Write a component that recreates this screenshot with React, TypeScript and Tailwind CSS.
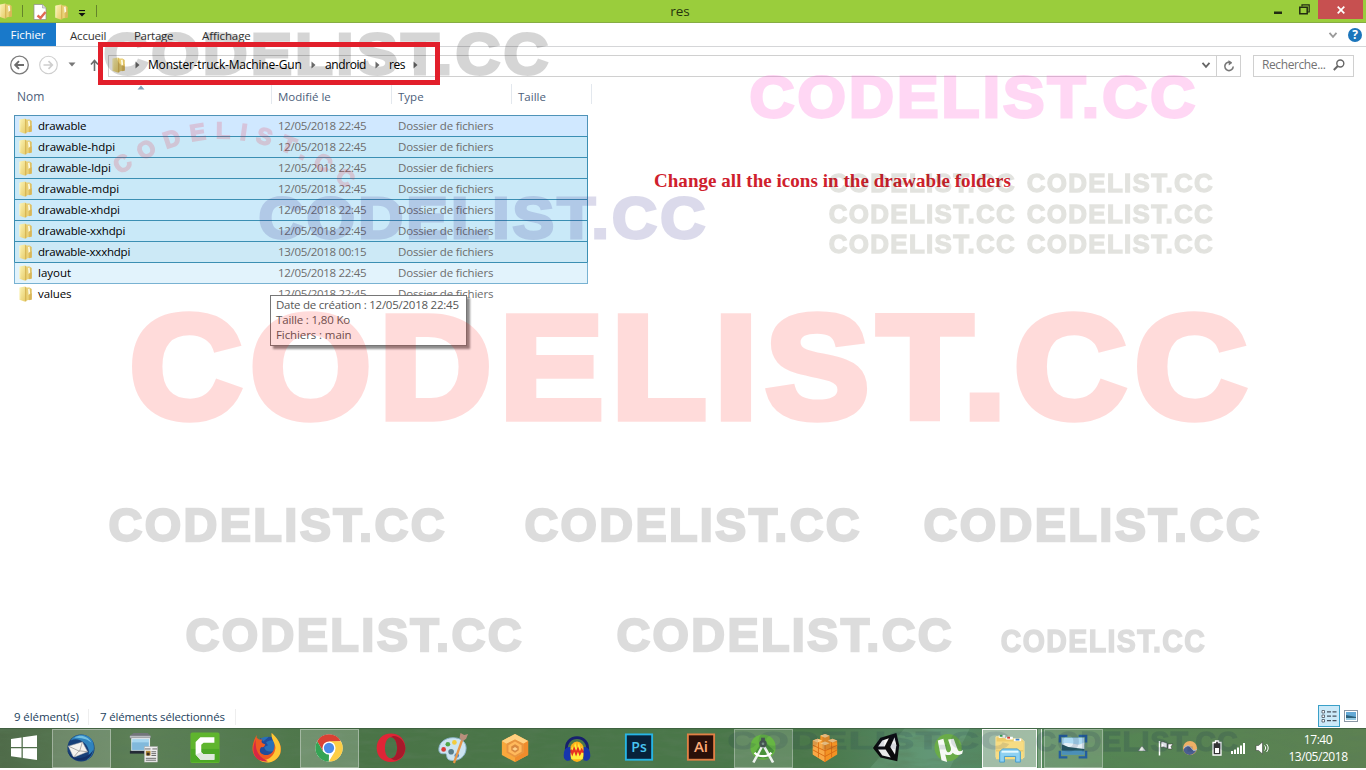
import React from 'react';

const Folder = ({ className = '' }: { className?: string }) => (
  <svg viewBox="0 0 16 16" className={'h-4 w-4 shrink-0 ' + className}>
    <defs>
      <linearGradient id="fa" x1="0" x2="1" y1="0" y2="1">
        <stop offset="0" stopColor="#fbf3b4" />
        <stop offset="1" stopColor="#e6ca66" />
      </linearGradient>
      <linearGradient id="fb" x1="0" x2="1">
        <stop offset="0" stopColor="#f7e48f" />
        <stop offset="1" stopColor="#dcbc5a" />
      </linearGradient>
    </defs>
    <path d="M6 1.500h5.500l2.200 1.600v10.400L8 14.500z" fill="url(#fb)" />
    <path d="M10 3l1.600-.6.6 5.600-1.600 1z" fill="#fdfbe6" />
    <path d="M11.500 8l2.200-.8v6.300l-2.600.7z" fill="#d9b658" />
    <path d="M1.500 1.600L7.200.6l1.200 1v13.600l-2 .4-4.900-1.800z" fill="url(#fa)" />
    <path d="M7.200.8l1.100.9v13.400l-1.100.3z" fill="#d3b04f" />
    <path d="M1.800 2v11.600" stroke="#fdf8cf" strokeWidth=".7" />
  </svg>
);

const Arrow = ({ className = '' }: { className?: string }) => (
  <svg viewBox="0 0 5 8" className={'h-2 w-[5px] shrink-0 ' + className}>
    <path d="M.5 .5L4.500 4 .5 7.500z" fill="#6a6a6a" />
  </svg>
);

const Chevron = ({ color, className = '' }: { color: string; className?: string }) => (
  <svg viewBox="0 0 10 8" className={'h-2 w-2.5 ' + className}>
    <path d="M1.500 1.800L5 5.800l3.500-4" fill="none" stroke={color} strokeWidth="1.800" />
  </svg>
);

const files = [
  ['drawable', '12/05/2018 22:45', 'tracking-[-0.2px]', 'border-[#4f93b8] bg-[#d0e8ff]'],
  ['drawable-hdpi', '12/05/2018 22:45', 'tracking-[-0.04px]', 'border-[#3b8fb3] bg-[#c9e9f8]'],
  ['drawable-ldpi', '12/05/2018 22:45', 'tracking-[-0.04px]', 'border-[#3b8fb3] bg-[#cce9f6]'],
  ['drawable-mdpi', '12/05/2018 22:45', 'tracking-[0px]', 'border-[#3b8fb3] bg-[#c9e9f8]'],
  ['drawable-xhdpi', '12/05/2018 22:45', 'tracking-[-0.12px]', 'border-[#3b8fb3] bg-[#cceafa]'],
  ['drawable-xxhdpi', '12/05/2018 22:45', 'tracking-[-0.16px]', 'border-[#3b8fb3] bg-[#c9e9f8]'],
  ['drawable-xxxhdpi', '13/05/2018 00:15', 'tracking-[-0.22px]', 'border-[#3b8fb3] bg-[#cce9f6]'],
  ['layout', '12/05/2018 22:45', '', 'border-t-[#3b8fb3] border-x-[#78b2d2] bg-[#e2f3fc]'],
  ['values', '12/05/2018 22:45', '-tracking-[0.1px]', 'border-[#78b2d2] bg-transparent'],
];

const marks: [number, number, number, number, string, number][] = [
  [104, 549, 31, 76, '#000', 0.16],
  [750, 1196, 75, 119, '#ff3ccd', 0.2],
  [259, 706, 195, 240, '#322d8c', 0.17],
  [131, 1249, 309, 423, '#ff0a05', 0.14],
  [109, 445, 507, 543, '#000', 0.135],
  [525, 860, 507, 543, '#000', 0.135],
  [924, 1260, 507, 543, '#000', 0.135],
  [186, 522, 617, 653, '#000', 0.135],
  [617, 952, 617, 653, '#000', 0.135],
  [1001, 1205, 629, 653, '#000', 0.135],
  [829, 1015, 173, 193, '#282d0f', 0.13],
  [1027, 1213, 173, 193, '#282d0f', 0.13],
  [829, 1015, 204, 224, '#282d0f', 0.13],
  [1027, 1213, 204, 224, '#282d0f', 0.13],
  [829, 1015, 234, 254, '#282d0f', 0.13],
  [1027, 1213, 234, 254, '#282d0f', 0.13],
  [728, 1010, 731, 750, '#142850', 0.12],
  [1036, 1238, 731, 752, '#142850', 0.15],
];

const Watermarks = () => (
  <svg className="pointer-events-none absolute left-0 top-0 h-[768px] w-[1366px]" viewBox="0 0 1366 768">
    {marks.map(([x1, x2, top, base, fill, opacity], i) => {
      const size = (base - top) / 0.775;
      return (
        <text
          key={i}
          x={x1 - size * 0.01}
          y={base - size * 0.036}
          textLength={x2 - x1 + size * 0.05}
          lengthAdjust="spacingAndGlyphs"
          letterSpacing={size * 0.05}
          fontFamily="'Liberation Sans', Arial, sans-serif"
          fontWeight="700"
          fontSize={size}
          fill={fill}
          stroke={fill}
          strokeWidth={size * 0.05}
          opacity={opacity}
        >
          CODELIST.CC
        </text>
      );
    })}
    <path id="arc" d="M120 175Q225 97 342 185" fill="none" />
    <text
      fontFamily="'Liberation Sans', Arial, sans-serif"
      fontWeight="700"
      fontSize="23"
      fill="#f0283c"
      stroke="#f0283c"
      strokeWidth="1.600"
      opacity=".18"
    >
      <textPath href="#arc" textLength="248">
        CODELIST.CC
      </textPath>
    </text>
  </svg>
);

const apps: { name: string; box?: string; art: React.ReactNode }[] = [
  {
    name: 'mail',
    box: 'border border-white/35 bg-white/15',
    art: (
      <>
        <circle cx="16" cy="16" r="14.500" fill="#173f78" />
        <path d="M5 8C9 1 22-1 28 8c4 8 1 17-6 21 4-7 3-13-2-18C15 6 9 6 5 8z" fill="#2f83bd" />
        <path d="M9 5c6-4 14-2 18 5-5-4-11-5-18-5z" fill="#72bfe1" />
        <path d="M2.500 14l15-4.500L23 20 8 26z" fill="#f5f2ee" stroke="#a8a9ad" strokeWidth=".5" />
        <path d="M2.500 14l12 5.500 3-10M14 19l-6 7M14 19l9 1" fill="none" stroke="#a9a6a4" />
        <path d="M1 18c3 10 12 13 21 10 4-2 6-6 7-10-4 7-13 10-20 8-4-2-6-4-8-8z" fill="#132f66" />
      </>
    ),
  },
  {
    name: 'news',
    art: (
      <>
        <path d="M2 3l4-3h15l3 3v3H2z" fill="#72757b" />
        <path d="M2 3h22v2H2z" fill="#b9bcc1" />
        <rect x="4" y="6" width="19" height="13" fill="#a7d6ef" stroke="#e9eef2" />
        <path d="M4 10h18v8H4z" fill="#5b9cc8" opacity=".5" />
        <path d="M2 19h23v3H2z" fill="#242a35" />
        <rect x="17.500" y="14.500" width="14" height="16.500" fill="#eee" stroke="#aaa" strokeWidth=".5" />
        <path d="M18 17h6M26 17h5M25 20h5M25 22h5M25 24h5M19 27h11M19 29h11" stroke="#555" strokeWidth=".9" />
        <path d="M19 19h5v5h-5z" fill="#b38a37" />
        <path d="M20 21h3v3h-3z" fill="#3a2c21" />
      </>
    ),
  },
  {
    name: 'recorder',
    art: (
      <>
        <rect x=".5" y="-.5" width="31" height="32.500" rx="2" fill="#5fb52e" />
        <path d="M1 17h30v14H1z" fill="#3fa022" opacity=".6" />
        <path d="M26 4.500v6H14.500l-2.500 2v8l2 2h12v6H11L6 23V9.500l5-5z" fill="#fff" />
        <path d="M6 23l6-2.500 2 2h12v6H11z" fill="#dfe9dd" />
      </>
    ),
  },
  {
    name: 'browser-fox',
    art: (
      <>
        <circle cx="16" cy="17" r="13" fill="#2870b8" />
        <path d="M9 5l3 4 6-5c5 0 8 3 10 7-6-5-10-3-13-1l2 3-4 2c1 6 9 6 12 2-1 9-14 10-19 4z" fill="#224c9b" />
        <path d="M5 2c-5 9-7 18 0 25 8 7 21 5 25-5 3-10-3-15-9-22 0 5 3 6 3 13 0 9-7 12-12 10-5-2-4-6-2-8 2 1 4-1 4-3-3-1-5-2-3-5-3 0-4 0-6-2z" fill="#ee5a22" />
        <path d="M21 0c8 7 11 14 9 22-4 9-14 12-22 7 9 1 16-4 17-13 0-6-5-9-4-16z" fill="#ffc735" />
        <path d="M4 7c-3 7-4 14 1 20 4 3 8 4 12 3C8 26 3 20 4 7z" fill="#d62845" />
      </>
    ),
  },
  {
    name: 'browser-ring',
    box: 'border border-white/35 bg-white/20',
    art: (
      <>
        <circle cx="16" cy="16" r="14.500" fill="#fff" />
        <path d="M3.400 8.700A14.500 14.500 0 0128.600 8.700L16 9.500 9.700 19.600z" fill="#d94133" />
        <path d="M3.400 8.700L9.700 19.600 16 23l-.2 7.500A14.500 14.500 0 013.400 8.700z" fill="#35a454" />
        <path d="M28.600 8.700H16l6.300 10.900-6.500 10.900A14.500 14.500 0 0028.600 8.700z" fill="#fdce45" />
        <circle cx="16" cy="16" r="7" fill="#fff" />
        <circle cx="16" cy="16" r="5.500" fill="#4b8ae8" />
      </>
    ),
  },
  {
    name: 'browser-o',
    art: (
      <>
        <path fillRule="evenodd" d="M16 .5C7 .5.7 7 .7 16S7 31 16 31s15.300-6 15.300-15S25 .5 16 .5zm0 4c4 0 6.500 5 6.500 11.500S20 27 16 27 9.500 22 9.500 16 12 4.500 16 4.500z" fill="#df2536" />
        <path fillRule="evenodd" d="M16 4.500c4-4 15 2 15.300 11.500C31 27 20 32 16 27c4 0 6.500-5 6.500-11S20 4.500 16 4.500z" fill="#a71a2b" />
      </>
    ),
  },
  {
    name: 'paint',
    art: (
      <>
        <path d="M16 5C6 5 0 12 1 19c1 4 5 3 7 3s0 6 5 7c9 2 17-4 17-13 0-7-6-11-14-11z" fill="#cce4f1" stroke="#8bb3ca" />
        <circle cx="6" cy="17.500" r="2.500" fill="#d83b36" />
        <circle cx="10.500" cy="12" r="2.500" fill="#50a647" />
        <circle cx="17.500" cy="10" r="2.500" fill="#f3cc3c" />
        <circle cx="14" cy="20" r="3" fill="#587b88" />
        <circle cx="20" cy="24" r="2.500" fill="#4e86c5" />
        <path d="M27 4L17 32" stroke="#e79648" strokeWidth="2.400" />
        <path d="M24 0l4 2 4-1-2 5-4 3-3-4z" fill="#b98f7c" />
      </>
    ),
  },
  {
    name: 'hexagon',
    art: (
      <>
        <path d="M16 1l14 7.500v15L16 31 2 23.500v-15z" fill="#f9a83c" />
        <path d="M2 8.500L16 1l14 7.500-5 3L16 7l-9 4.500z" fill="#ffd180" />
        <path d="M30 8.500v15L16 31v-5l9-5v-9.500z" fill="#f08c2c" />
        <path d="M16 7l9 4.500V21l-9 5-9-5v-9.500z" fill="#e89540" />
        <path d="M16 9l7 4v7l-7 4-7-4v-7z" fill="#ffb95c" />
        <path d="M16 12l4 2.500v4L16 21l-4-2.500v-4z" fill="#d8893f" />
        <path d="M13 17l3-2 3 2-3 2z" fill="#ffd08a" />
      </>
    ),
  },
  {
    name: 'headphones',
    art: (
      <>
        <ellipse cx="16" cy="20" rx="8" ry="11" fill="#ffb21a" />
        <path d="M9 20l2-6 1 4 2-8 2 7 2-7 2 8 1-4 2 6-1 8H10z" fill="#ffee3c" />
        <path d="M8 20l2-1 1 3 2-5 2 5 2-5 2 5 2-4 1 2 2 0" fill="none" stroke="#e73122" strokeWidth="2.200" />
        <path d="M5 20C1 0 31 0 27 20" fill="none" stroke="#17206e" strokeWidth="3" />
        <path d="M9 15v14C4 31 1 27 2 22c0-4 3-8 7-7zM23 15v14c5 2 8-2 7-7 0-4-3-8-7-7z" fill="#1735ad" />
      </>
    ),
  },
  {
    name: 'photo-editor',
    art: (
      <>
        <rect x="2" y="1.500" width="28" height="27" fill="#08223b" stroke="#27b5e5" strokeWidth="2" />
        <text x="16" y="20.500" textAnchor="middle" fontFamily="'Open Sans', sans-serif" fontWeight="600" fontSize="15" fill="#48c5f1">Ps</text>
      </>
    ),
  },
  {
    name: 'vector-editor',
    art: (
      <>
        <rect x="2" y="1.500" width="28" height="27" fill="#2b1009" stroke="#e18045" strokeWidth="2" />
        <text x="16" y="20.500" textAnchor="middle" fontFamily="'Open Sans', sans-serif" fontWeight="600" fontSize="16" fill="#ffab78">Ai</text>
      </>
    ),
  },
  {
    name: 'app-studio',
    box: 'border border-white/30 bg-white/15',
    art: (
      <>
        <circle cx="16" cy="15" r="13.500" fill="#66b642" />
        <path d="M8 20L16 8l12 11-7 8H11z" fill="#49923a" />
        <path d="M15 12h2.500L28 31l-2.500 1-9-16h-1L7 32l-2.500-1z" fill="#eef3f0" />
        <path d="M7 21c5 5 13 5 18 0" fill="none" stroke="#fff" strokeWidth="2.400" />
        <circle cx="16" cy="11.500" r="4" fill="#4b5a50" />
        <path d="M14 5h4v4h-4z" fill="#4b5a50" />
        <circle cx="16" cy="11.500" r="1.400" fill="#8aa290" />
      </>
    ),
  },
  {
    name: 'building-box',
    art: (
      <>
        <path d="M3 8l5-2 3 1V3l5-2 5 2v4l3-1 5 2v15l-13 8-13-8z" fill="#f39324" />
        <path d="M3 8l5-2 4 2v3l4 2v18L3 23z" fill="#f8a946" />
        <path d="M11 3l5-2 5 2-5 2zM3 8l5-2 5 2-5 2zM19 8l5-2 5 2-5 2zM11 11l5-2 5 2-5 2z" fill="#ffcf87" />
        <path d="M16 13v18M3 13l13 6 13-6M3 18l13 7 13-7M9 10v16M23 10v16" stroke="#d96c13" fill="none" />
      </>
    ),
  },
  {
    name: 'cube-engine',
    art: (
      <>
        <path d="M1 16L9 5l17-5 3 13-2 17-18-4z" fill="#0b0b0d" />
        <path d="M6.500 14.500L11 8l7-2.500-4.500 9z" fill="#f8f8f8" />
        <path d="M24 4.500l2 8.500-1.500 10-5-8z" fill="#f1f1f1" />
        <path d="M6.500 17.500h8l5.500 8.500-9-2z" fill="#e9e9e9" />
      </>
    ),
  },
  {
    name: 'torrent',
    art: (
      <>
        <circle cx="15" cy="15.500" r="14.500" fill="#6aac48" />
        <path d="M4 8l6-2 3 12c1 4 6 3 5-2L15 7l6-1 4 11c1 3 3 3 6 1l-1 4c-4 2-7 2-10-1-2 3-5 3-8 2l2 8-6-2z" fill="#f7faf5" />
      </>
    ),
  },
  {
    name: 'explorer',
    box: 'border border-white/90 bg-white/45',
    art: (
      <>
        <path d="M1 4h8l2 2h17l3 3v17H1z" fill="#edcb69" stroke="#f9e5a0" />
        <path d="M4 2h7v3H4zM12 4h7v3h-7zM20 6h8v3h-8z" fill="#fff" />
        <path d="M5 2h3v2H5z" fill="#36a853" /><path d="M13 4h3v2h-3z" fill="#d83d32" /><path d="M22 6h4v2h-4z" fill="#4285c7" />
        <path d="M1 9h29v19H1z" fill="#f7dc83" />
        <path d="M1 19h29" stroke="#e6bf5c" />
        <path d="M5 31V20l3-3h16l3 3v11h-5v-6H10v6z" fill="#8fd1f2" stroke="#409bd0" />
        <path d="M7 20h18" stroke="#e7faff" strokeWidth="2" />
      </>
    ),
  },
  {
    name: 'picture',
    box: 'border border-white/30 bg-white/15',
    art: (
      <>
        <path d="M2 10V3h8M22 3h8v7M30 19v7h-8M10 26H2v-7" stroke="#235e9f" strokeWidth="2.500" fill="none" />
        <rect x="4" y="5" width="24" height="18" fill="#4b98ce" />
        <path d="M4 5h24v7H4z" fill="#acdaf2" /><path d="M4 12c8-4 15 3 24-2v7H4z" fill="#e5f0f6" />
        <path d="M4 12l7 3 17 2v2H4z" fill="#285a62" /><path d="M4 19h24v4H4z" fill="#4b8fb8" />
      </>
    ),
  },
];

const Wallpaper = () => (
  <svg className="absolute inset-0 h-10 w-full" viewBox="0 0 1366 40" preserveAspectRatio="none">
    <defs>
      <linearGradient id="grass">
        <stop offset="0" stopColor="#4f6b49" />
        <stop offset=".1" stopColor="#5d8057" />
        <stop offset=".26" stopColor="#4a7447" />
        <stop offset=".6" stopColor="#4a784a" />
        <stop offset=".68" stopColor="#568a69" />
        <stop offset=".8" stopColor="#548554" />
        <stop offset="1" stopColor="#5d8152" />
      </linearGradient>
      <filter id="blades" x="0" y="0" width="100%" height="100%">
        <feTurbulence type="fractalNoise" baseFrequency=".035 .16" numOctaves="3" seed="4" />
        <feColorMatrix values="0 0 0 0 .1  0 0 0 0 .2  0 0 0 0 .1  1.600 0 0 0 -.65" />
      </filter>
    </defs>
    <rect width="1366" height="40" fill="url(#grass)" />
    <path d="M870 40L905 0h65l-20 40z" fill="#8fc5a2" opacity=".22" />
    <rect width="1366" height="40" filter="url(#blades)" opacity=".6" />
    <path d="M0 .5h1366" stroke="#37553a" opacity=".6" />
  </svg>
);

export default function App() {
  return (
    <div className="relative flex h-[768px] w-[1366px] flex-col overflow-hidden bg-white font-['Open_Sans','Noto_Sans',sans-serif] text-[11.500px] leading-4 text-black">
      <header className="flex h-[23px] shrink-0 items-start border-b border-[#86ad43] bg-[#9acd3c]">
        <div className="flex h-[22px] w-[620px] items-center">
          <Folder className="-ml-0.5" />
          <span className="ml-2 h-3 w-px bg-[#64842b]" />
          <svg viewBox="0 0 14 16" className="ml-2.5 mt-0.5 h-4 w-3.5">
            <path d="M1 .5h8.500L13 4v11.500H1z" fill="#fff" stroke="#8c8c8c" strokeWidth=".7" />
            <path d="M9.500.5V4H13" fill="#ddd" stroke="#999" strokeWidth=".6" />
            <path d="M4.500 11.500l3 2.500L12.500 8" fill="none" stroke="#e06a52" strokeWidth="2.400" />
          </svg>
          <Folder className="ml-[7px] mt-0.5" />
          <svg viewBox="0 0 8 7" className="ml-2 mt-1 h-[7px] w-2"><path d="M1 .5h6" stroke="#111" strokeWidth="1.200" /><path d="M.5 3h7L4 6.500z" fill="#111" /></svg>
          <span className="ml-2.5 h-3 w-px bg-[#64842b]" />
        </div>
        <div className="w-[120px] pt-[3px] text-center text-[13.500px] text-[#26340c]">res</div>
        <div className="ml-auto flex h-[19px] items-center pr-[3px]">
          <svg viewBox="0 0 8 4" className="mr-[17px] mt-1.5 h-1 w-2"><path d="M0 .5h8V3H0z" fill="#222b12" /></svg>
          <svg viewBox="0 0 11 11" className="mr-2 mt-[-1px] h-[11px] w-[11px]"><path d="M3 2.500V.8h7.200V8H8.500" fill="none" stroke="#222b12" strokeWidth="1.200" /><path d="M.8 3.200h7.400v6.600H.8z" fill="none" stroke="#222b12" strokeWidth="1.500" /></svg>
          <div className="flex h-[19px] w-[45px] items-center justify-center bg-[#c75050]">
            <svg viewBox="0 0 8 8" className="h-2 w-2"><path d="M.7.7l6.600 6.600M7.300.7L.7 7.300" stroke="#fff" strokeWidth="1.700" /></svg>
          </div>
        </div>
      </header>

      <nav className="flex h-6 shrink-0 border-b border-[#d5d6d8] text-[#333]">
        <div className="flex h-[23px] w-14 items-center justify-center bg-[#1979ca] tracking-[-0.1px] text-white">Fichier</div>
        <span className="ml-3.5 w-16 pt-[5px] tracking-[-0.2px]">Accueil</span>
        <span className="w-[68px] pt-[5px] tracking-[-0.3px]">Partage</span>
        <span className="pt-[5px] tracking-[-0.1px]">Affichage</span>
        <div className="ml-auto flex items-center gap-2.5 pr-1">
          <Chevron color="#9a9a9a" />
          <div className="flex h-3.5 w-3.5 items-center justify-center rounded-full bg-[#1b75bb] text-xs font-bold text-white">?</div>
        </div>
      </nav>

      <section className="flex h-[37px] shrink-0 items-center">
        <svg viewBox="0 0 20 20" className="-mt-0.5 ml-[9px] h-5 w-5"><circle cx="10.500" cy="10" r="8.800" fill="none" stroke="#7c7c7c" strokeWidth="1.300" /><path d="M15 10H6.500M10 6.200L6.200 10l3.800 3.800" fill="none" stroke="#6c6c6c" strokeWidth="1.900" /></svg>
        <svg viewBox="0 0 20 20" className="-mt-0.5 ml-[9px] h-5 w-5"><circle cx="10.500" cy="10" r="8.800" fill="none" stroke="#cecece" strokeWidth="1.100" /><path d="M5.500 10H14M10.500 6.200l3.800 3.800-3.800 3.800" fill="none" stroke="#cecece" strokeWidth="1.700" /></svg>
        <svg viewBox="0 0 8 5" className="-mt-0.5 ml-[10px] h-[5px] w-2"><path d="M.5.5h7L4 4.500z" fill="#777" /></svg>
        <svg viewBox="0 0 9 12" className="-mt-0.5 ml-[14px] h-3 w-[9px]"><path d="M4.500 12V2M1 5.500L4.500 1.500 8 5.500" fill="none" stroke="#6b6b6b" strokeWidth="1.600" /></svg>
        <div className="ml-[9px] flex h-[22px] w-[1133px] items-center border border-[#d0d0d0] pb-px">
          <Folder className="ml-0.5" />
          <Arrow className="ml-2" />
          <span className="ml-2 w-[154px] whitespace-nowrap text-[12px] tracking-[-0.19px]">Monster-truck-Machine-Gun</span>
          <Arrow className="ml-[9px]" />
          <span className="ml-[9px] w-[41px] text-[12px] tracking-[-0.4px]">android</span>
          <Arrow className="ml-[9px]" />
          <span className="ml-[9px] w-[15px] text-[12px] tracking-[-0.5px]">res</span>
          <Arrow className="ml-[9px]" />
          <Chevron color="#666" className="ml-auto mr-[5px]" />
          <div className="-mb-px flex h-5 w-6 items-center justify-center border-l border-[#d0d0d0]">
            <svg viewBox="0 0 12 12" className="h-3 w-3"><path d="M8.500 3A4.200 4.200 0 1010.200 6.500" fill="none" stroke="#777" strokeWidth="1.600" /><path d="M5.500 0L9 3 5.800 5.500z" fill="#777" /></svg>
          </div>
        </div>
        <div className="ml-[12px] flex h-[22px] w-[101px] items-center justify-between border border-[#d0d0d0] pb-px pl-2 pr-2 text-[#737373]">
          <span className="text-[12px] tracking-[-0.4px]">Recherche...</span>
          <svg viewBox="0 0 12 12" className="h-3 w-3"><circle cx="7.300" cy="4.500" r="3.500" fill="none" stroke="#666" strokeWidth="1.400" /><path d="M4.800 7L.8 11" stroke="#666" strokeWidth="1.900" /></svg>
        </div>
      </section>

      <main className="flex grow flex-col">
        <div className="flex h-[19px] text-[#4c607a]">
          <span className="relative w-[271px] pl-[17px] pt-[5px] text-[12px]">
            Nom
            <svg viewBox="0 0 8 5" className="absolute left-[137px] top-px h-[5px] w-2"><path d="M4 .5L7.500 4.500H.5z" fill="#82a2ba" /></svg>
          </span>
          <span className="h-5 w-[120px] border-l border-[#e3e8ee] pl-1.5 pt-[5px]">Modifié le</span>
          <span className="h-5 w-[120px] border-l border-[#e3e8ee] pl-1.5 pt-[5px]">Type</span>
          <span className="h-5 w-20 border-l border-[#e3e8ee] pl-1.5 pt-[5px]">Taille</span>
          <span className="h-5 border-l border-[#e3e8ee]" />
        </div>
        <div className="ml-3.5 mt-3 flex">
          <div className="w-[574px]">
            {files.map(([name, date, track, look], i) => (
              <div key={name} className={'flex h-[21px] items-center border-t ' + (i < 8 ? 'border-x ' : 'px-px ') + look}>
                <Folder className="-mt-px ml-[3px]" />
                <span className={'ml-1 w-60 ' + track}>{name}</span>
                <span className="w-[120px] tracking-[-0.32px] text-[#6d6d6d]">{date}</span>
                <span className="tracking-[-0.18px] text-[#6d6d6d]">Dossier de fichiers</span>
              </div>
            ))}
          </div>
          <p className="ml-[66px] mt-[54px] whitespace-nowrap font-['Liberation_Serif',serif] text-[19px] font-bold leading-6 tracking-[0.04px] text-[#cf202c]">Change all the icons in the drawable folders</p>
        </div>
        <div className="mt-auto flex h-6 items-center text-[#243f5d]">
          <span className="ml-3.5 mt-0.5 w-[75px] border-r border-[#eee] tracking-[-0.1px]">9 élément(s)</span>
          <span className="ml-[11px] mt-0.5 w-[136px] whitespace-nowrap border-r border-[#eee] tracking-[-0.18px]">7 éléments sélectionnés</span>
          <div className="ml-auto flex h-[22px] w-[22px] items-center justify-center border border-[#3aa0c8] bg-[#cbe9f8]">
            <svg viewBox="0 0 16 14" className="h-3.5 w-4"><path d="M1 1.500h2.500v2.500H1zM1 6h2.500v2.500H1zM1 10.500h2.500V13H1z" fill="#fff" stroke="#49515d" strokeWidth=".8" /><path d="M6 2.800h4M11.500 2.800h4M6 7.200h4M11.500 7.200h4M6 11.700h4M11.500 11.700h4" stroke="#49515d" strokeWidth="1.200" /></svg>
          </div>
          <svg viewBox="0 0 14 12" className="ml-1 mr-2 h-3 w-3.5"><rect x=".5" y=".5" width="13" height="11" fill="#fff" stroke="#8b97a5" /><path d="M2 2h10v8H2z" fill="#64a9d6" /><path d="M2 5l10 2v3H2z" fill="#2c617c" /><path d="M2 8h10v2H2z" fill="#92c8e2" /></svg>
        </div>
      </main>

      <footer className="relative h-10 shrink-0">
        <Wallpaper />
        <div className="relative flex h-10 items-center">
          <div className="flex w-[51px] justify-center pr-[3px]">
            <svg viewBox="0 0 28 26" className="h-[26px] w-7"><path d="M1 4l10.500-1.500V12H1zM12.800 2.300L27 .3V12H12.800zM1 13.300h10.500v9.500L1 21.300zM12.800 13.300H27V25l-14.200-2z" fill="#fff" /></svg>
          </div>
          {apps.map((a) => (
            <div key={a.name} className="flex h-10 w-[62px] shrink-0 items-center pl-px">
              <div
                className={
                  'flex h-[39px] items-center justify-center ' + (a.name === 'explorer' ? 'w-[55px] ' : 'w-[59px] pr-0.5 ') + (a.box ?? '')
                }
              >
                <svg viewBox="0 0 32 32" className="h-[30px] w-[30px] overflow-visible">{a.art}</svg>
              </div>
              {a.name === 'explorer' && <span className="ml-px h-[39px] w-1 border-r border-white/80 bg-white/20" />}
            </div>
          ))}
          <div className="ml-[33px] flex items-center text-white">
            <svg viewBox="0 0 8 5" className="h-[5px] w-2"><path d="M4 0l4 5H0z" fill="#e8eee8" stroke="#445" strokeWidth=".4" /></svg>
            <svg viewBox="0 0 16 16" className="ml-3 h-4 w-4"><path d="M1.500 1v14.500" stroke="#fff" strokeWidth="1.500" /><path d="M3 2c3-1 4 1 6 1v5C7 8 6 6 3 7.500zM10 4h5l-2 2.500L14 9h-4z" fill="#fff" stroke="#333" strokeWidth=".5" /></svg>
            <svg viewBox="0 0 16 16" className="ml-2 h-4 w-4"><circle cx="8" cy="8" r="7" fill="#eeb066" /><path d="M1.300 10C4 5 7 5 9 8s4 3 5.500 2C12 16 4 17 1.300 10z" fill="#4a5f90" /><path d="M2 8c4-4 6-2 8 1s4 1 5 0" stroke="#a7bfe1" fill="none" /></svg>
            <svg viewBox="0 0 10 16" className="ml-[14px] h-4 w-2.5"><path d="M3.500 1h3v1.500H9V15H1V2.500h2.500z" fill="#333" stroke="#fff" strokeWidth="1.300" /><path d="M3 8h4v5H3z" fill="#fff" /></svg>
            <svg viewBox="0 0 16 12" className="ml-2 h-3 w-4"><path d="M1 9h2v3H1zM4 7.500h2V12H4zM7 5.500h2V12H7zM10 3.500h2V12h-2zM13 1h2v11h-2z" fill="#fff" /></svg>
            <svg viewBox="0 0 14 14" className="ml-[9px] h-3.5 w-3.5"><path d="M1 4.500h2.500L7.500 1v12L3.500 9.500H1z" fill="#fff" stroke="#333" strokeWidth=".5" /><path d="M9.500 4.500c1.500 1.500 1.500 3.500 0 5M11.500 3c2.200 2.500 2.200 5.500 0 8" fill="none" stroke="#fff" /></svg>
          </div>
          <div className="ml-auto mr-[14px] w-[68px] text-center text-[12px] leading-[17px] tracking-[-0.45px] text-white">
            <div>17:40</div>
            <div>13/05/2018</div>
          </div>
        </div>
      </footer>

      <div className="absolute left-[270px] top-[295px] h-[51px] w-[197px] border border-[#767676] bg-white pl-[5px] pt-px leading-[15px] text-[#575757] shadow-[3px_3px_2px_rgba(0,0,0,.45)]">
        <div className="tracking-[-0.24px]">Date de création : 12/05/2018 22:45</div>
        <div className="tracking-[-0.15px]">Taille : 1,80 Ko</div>
        <div className="tracking-[-0.1px]">Fichiers : main</div>
      </div>
      <Watermarks />
      <div className="absolute left-[98px] top-[42px] h-[43px] w-[342px] border-[5px] border-[#e21f2b]" />
    </div>
  );
}
